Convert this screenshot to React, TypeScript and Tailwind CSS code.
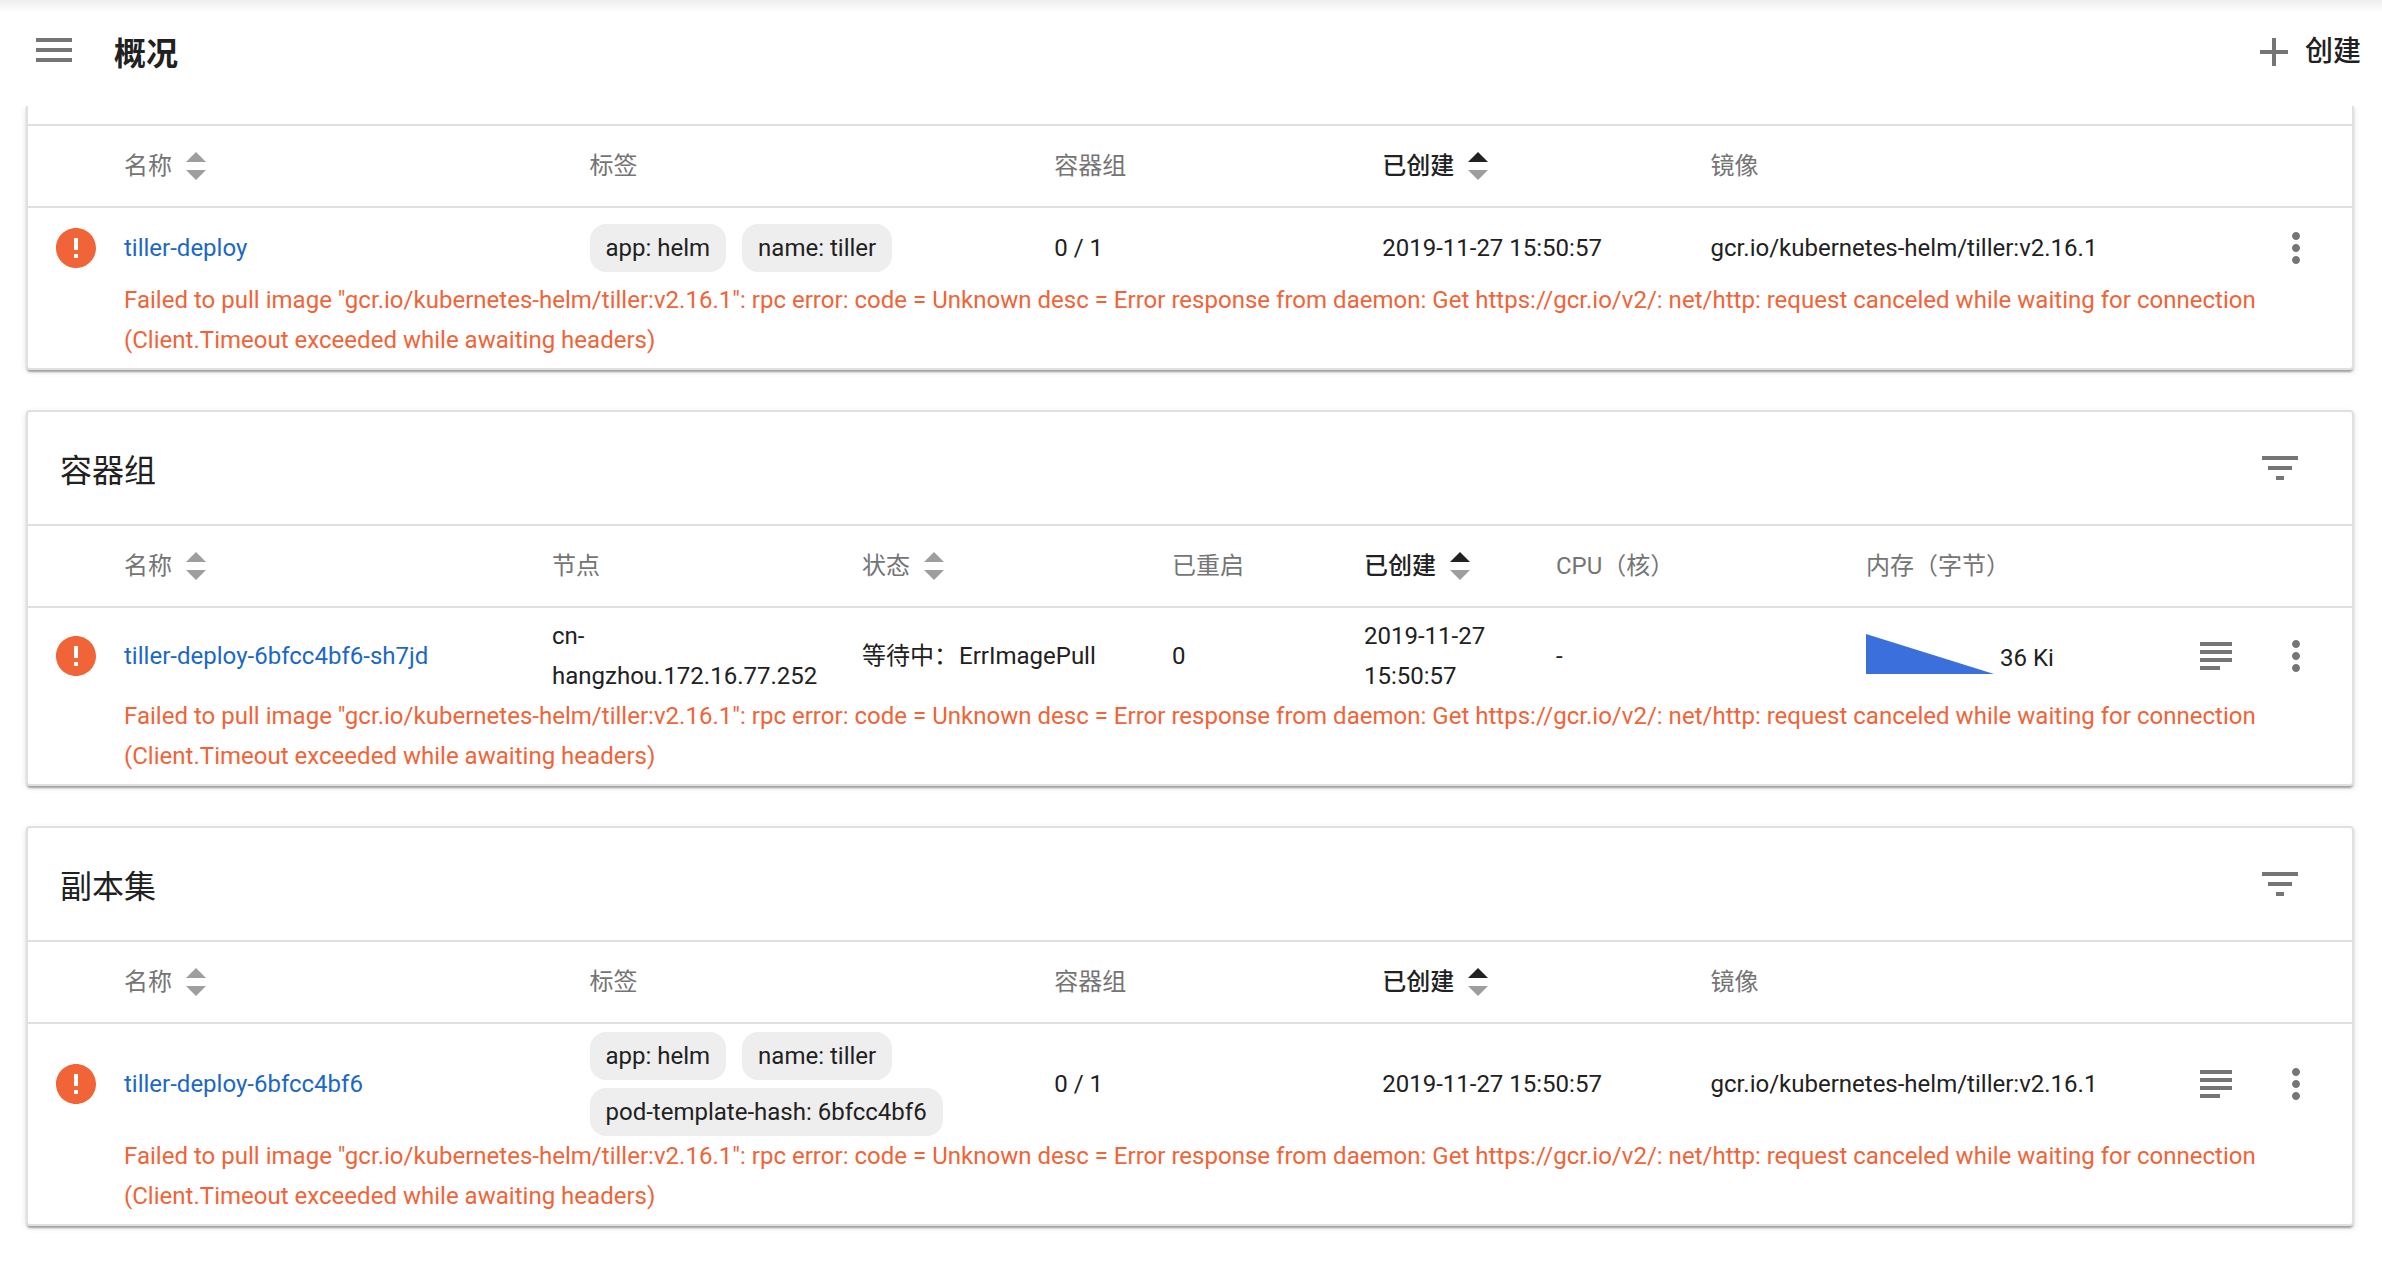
import type { ReactNode } from "react";

const ERROR_TEXT =
  'Failed to pull image "gcr.io/kubernetes-helm/tiller:v2.16.1": rpc error: code = Unknown desc = Error response from daemon: Get https://gcr.io/v2/: net/http: request canceled while waiting for connection (Client.Timeout exceeded while awaiting headers)';

function MenuIcon() {
  return (
    <svg className="size-12 shrink-0 fill-[#757575]" viewBox="0 0 24 24">
      <path d="M3 18h18v-2H3v2zm0-5h18v-2H3v2zm0-7v2h18V6H3z" />
    </svg>
  );
}

function PlusIcon() {
  return (
    <svg className="size-12 shrink-0 fill-[#757575]" viewBox="0 0 24 24">
      <path d="M19 13h-6v6h-2v-6H5v-2h6V5h2v6h6v2z" />
    </svg>
  );
}

function FilterIcon() {
  return (
    <svg className="size-12 shrink-0 fill-[#757575]" viewBox="0 0 24 24">
      <path d="M10 18h4v-2h-4v2zM3 6v2h18V6H3zm3 7h12v-2H6v2z" />
    </svg>
  );
}

function LogsIcon() {
  return (
    <svg className="size-12 shrink-0 fill-[#757575]" viewBox="0 0 24 24">
      <path d="M4 5h16v2H4zM4 9h16v2H4zM4 13h16v2H4zM4 17h10v2H4z" />
    </svg>
  );
}

function MoreIcon() {
  return (
    <svg className="size-12 shrink-0 fill-[#757575]" viewBox="0 0 24 24">
      <path d="M12 8c1.1 0 2-.9 2-2s-.9-2-2-2-2 .9-2 2 .9 2 2 2zm0 2c-1.1 0-2 .9-2 2s.9 2 2 2 2-.9 2-2-.9-2-2-2zm0 6c-1.1 0-2 .9-2 2s.9 2 2 2 2-.9 2-2-.9-2-2-2z" />
    </svg>
  );
}

function ErrorIcon() {
  return (
    <svg className="size-12 shrink-0 fill-[#f06438]" viewBox="0 0 24 24">
      <path d="M12 2C6.48 2 2 6.48 2 12s4.48 10 10 10 10-4.480 10-10S17.520 2 12 2zm1 15h-2v-2h2v2zm0-4h-2V7h2v6z" />
    </svg>
  );
}

function SortArrows({ active = false }: { active?: boolean }) {
  return (
    <svg className="ml-[14px] h-7 w-5 shrink-0" viewBox="0 0 20 28">
      <path d="M0 10L10 0l10 10z" className={active ? "fill-[#212121]" : "fill-[#9e9e9e]"} />
      <path d="M0 18h20L10 28z" className="fill-[#9e9e9e]" />
    </svg>
  );
}

type Column = { label: string; width: string; sort?: "idle" | "active" };

function HeaderRow({ columns }: { columns: Column[] }) {
  return (
    <div className="flex h-[82px] items-center border-b-2 border-[#e0e0e0] pl-24 text-[#757575]">
      {columns.map((column) => (
        <div key={column.label} className={`flex shrink-0 items-center ${column.width}`}>
          <span className={column.sort === "active" ? "font-medium text-[#212121]" : ""}>{column.label}</span>
          {column.sort && <SortArrows active={column.sort === "active"} />}
        </div>
      ))}
    </div>
  );
}

function Row({ height, logs, children }: { height: string; logs?: boolean; children: ReactNode }) {
  return (
    <div className={`flex items-center ${height}`}>
      <div className="flex w-24 shrink-0 pl-6">
        <ErrorIcon />
      </div>
      {children}
      <div className="mr-8 ml-auto flex gap-8">
        {logs && <LogsIcon />}
        <MoreIcon />
      </div>
    </div>
  );
}

function ErrorMessage() {
  return <p className="-mt-2 ml-24 h-[88px] w-[2160px] tracking-[0.017px] text-[#f06438]">{ERROR_TEXT}</p>;
}

function CardTitle({ children }: { children: ReactNode }) {
  return (
    <div className="flex h-[114px] items-center justify-between border-b-2 border-[#e0e0e0] pr-12 pl-8">
      <h2 className="pt-1.5 text-[32px] leading-10">{children}</h2>
      <FilterIcon />
    </div>
  );
}

function Card({ shape = "rounded-[4px] border-2", children }: { shape?: string; children: ReactNode }) {
  return (
    <section
      className={`border-[#e0e0e0] bg-white shadow-[0_4px_2px_-2px_rgba(0,0,0,0.2),0_2px_2px_0_rgba(0,0,0,0.14),0_2px_6px_0_rgba(0,0,0,0.12)] ${shape}`}
    >
      {children}
    </section>
  );
}

function Chip({ children }: { children: ReactNode }) {
  return <span className="h-12 rounded-2xl bg-[#eeeeee] px-4 leading-12">{children}</span>;
}

const workloadColumns: Column[] = [
  { label: "名称", width: "w-[465.5px]", sort: "idle" },
  { label: "标签", width: "w-[464.7px]" },
  { label: "容器组", width: "w-[328px]" },
  { label: "已创建", width: "w-[328.4px]", sort: "active" },
  { label: "镜像", width: "w-[400px]" },
];

const podColumns: Column[] = [
  { label: "名称", width: "w-[428px]", sort: "idle" },
  { label: "节点", width: "w-[310px]" },
  { label: "状态", width: "w-[310px]", sort: "idle" },
  { label: "已重启", width: "w-[192px]" },
  { label: "已创建", width: "w-[192px]", sort: "active" },
  { label: "CPU（核）", width: "w-[310px]" },
  { label: "内存（字节）", width: "w-[300px]" },
];

function WorkloadCells({ name, labels }: { name: string; labels: string[] }) {
  return (
    <>
      <div className="w-[465.5px] shrink-0 text-[#1b68c6]">{name}</div>
      <div className="flex w-[464.7px] shrink-0 flex-wrap gap-x-4 gap-y-2">
        {labels.map((label) => (
          <Chip key={label}>{label}</Chip>
        ))}
      </div>
      <div className="w-[328px] shrink-0">0 / 1</div>
      <div className="w-[328.4px] shrink-0">2019-11-27 15:50:57</div>
      <div className="shrink-0">gcr.io/kubernetes-helm/tiller:v2.16.1</div>
    </>
  );
}

export default function App() {
  return (
    <div className="flex h-[1264px] w-[2382px] flex-col overflow-hidden bg-white font-[Roboto,'Noto_Sans_CJK_SC',sans-serif] text-[24px] leading-10 text-[#212121]">
      <div className="h-3 shrink-0 bg-linear-to-b from-[#eeeeee] to-white" />
      <header className="flex h-[94px] shrink-0 items-start justify-between pr-[21px] pl-[30px]">
        <div className="flex items-start pt-[14px]">
          <MenuIcon />
          <h1 className="ml-9 pt-2 text-[32px] font-bold">概况</h1>
        </div>
        <div className="flex items-start pt-4 text-[28px] font-medium">
          <PlusIcon />
          <span className="ml-[7px] pt-1">创建</span>
        </div>
      </header>
      <main className="flex-1 overflow-hidden">
        <div className="flex flex-col gap-10 pr-7 pl-[26px]">
          <Card shape="rounded-b-[4px] border-x-2 border-b-2">
            <div className="h-5 border-b-2 border-[#e0e0e0]" />
            <HeaderRow columns={workloadColumns} />
            <Row height="h-20">
              <WorkloadCells name="tiller-deploy" labels={["app: helm", "name: tiller"]} />
            </Row>
            <ErrorMessage />
          </Card>
          <Card>
            <CardTitle>容器组</CardTitle>
            <HeaderRow columns={podColumns} />
            <Row height="h-24" logs>
              <div className="w-[428px] shrink-0 tracking-[0.017px] text-[#1b68c6]">tiller-deploy-6bfcc4bf6-sh7jd</div>
              <div className="w-[310px] shrink-0">
                cn-
                <br />
                hangzhou.172.16.77.252
              </div>
              <div className="w-[310px] shrink-0">
                等待中：<span className="ml-px">ErrImagePull</span>
              </div>
              <div className="w-[192px] shrink-0">0</div>
              <div className="w-[192px] shrink-0">
                2019-11-27
                <br />
                15:50:57
              </div>
              <div className="w-[310px] shrink-0">-</div>
              <div className="flex shrink-0 items-center">
                <svg className="mb-1 h-10 w-[128px]" viewBox="0 0 128 40">
                  <path d="M0 0l128 40H0z" fill="#3b70dc" />
                </svg>
                <span className="mt-1 ml-[6px]">36 Ki</span>
              </div>
            </Row>
            <ErrorMessage />
          </Card>
          <Card>
            <CardTitle>副本集</CardTitle>
            <HeaderRow columns={workloadColumns} />
            <Row height="h-[120px]" logs>
              <WorkloadCells
                name="tiller-deploy-6bfcc4bf6"
                labels={["app: helm", "name: tiller", "pod-template-hash: 6bfcc4bf6"]}
              />
            </Row>
            <ErrorMessage />
          </Card>
        </div>
      </main>
    </div>
  );
}
